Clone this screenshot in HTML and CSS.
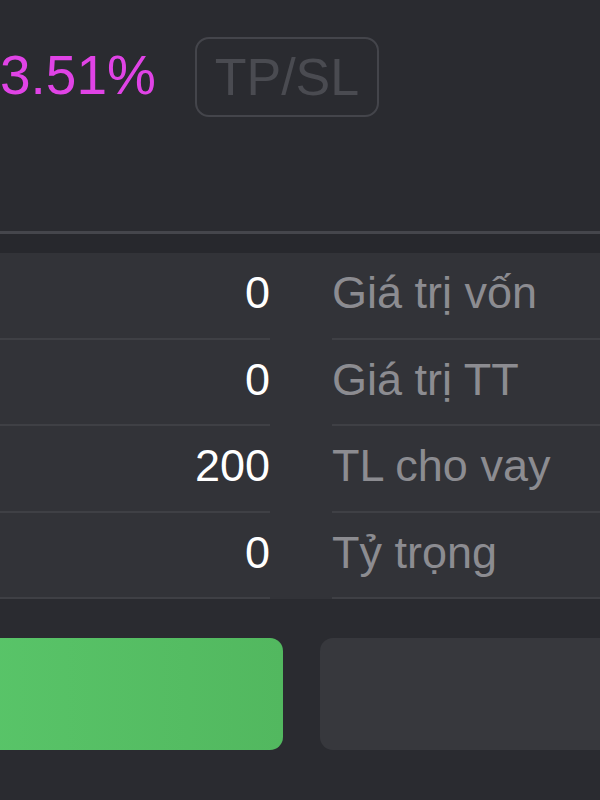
FILE: index.html
```html
<!DOCTYPE html>
<html lang="vi">
<head>
<meta charset="utf-8">
<link rel="stylesheet" href="styles.css">
</head>
<body>
<div class="page">
  <div class="header">
    <span class="pct">3.51%</span>
    <div class="tpsl">TP/SL</div>
  </div>
  <div class="divider"></div>
  <div class="strip"></div>
  <div class="table">
    <div class="row"><div class="val">0</div><div class="gap"></div><div class="lbl">Giá trị vốn</div></div>
    <div class="row"><div class="val">0</div><div class="gap"></div><div class="lbl">Giá trị TT</div></div>
    <div class="row"><div class="val">200</div><div class="gap"></div><div class="lbl">TL cho vay</div></div>
    <div class="row"><div class="val">0</div><div class="gap"></div><div class="lbl">Tỷ trọng</div></div>
  </div>
  <div class="actions">
    <div class="btn btn-buy"></div>
    <div class="btn btn-sell"></div>
  </div>
</div>
</body>
</html>
```
FILE: styles.css
```css
html, body {
  margin: 0;
  padding: 0;
  background: #2a2b30;
  overflow: hidden;
}
.page {
  width: 600px;
  height: 800px;
  overflow: hidden;
  font-family: "Liberation Sans", Arial, sans-serif;
}
.header {
  height: 231px;
  box-sizing: border-box;
  padding-top: 37px;
  display: flex;
  align-items: flex-start;
}
.pct {
  color: #e043e6;
  font-size: 55px;
  line-height: 76px;
  margin-left: 0;
}
.tpsl {
  margin-left: 39px;
  width: 184px;
  height: 80px;
  box-sizing: border-box;
  border: 2px solid #44454b;
  border-radius: 14px;
  color: #4a4b51;
  font-size: 52px;
  display: flex;
  align-items: center;
  justify-content: center;
}
.divider {
  height: 3px;
  background: #45464c;
}
.strip {
  height: 19px;
  background: #27282d;
}
.table {
  background: #323338;
}
.row {
  display: flex;
  height: 86.5px;
  font-size: 45px;
}
.val {
  width: 270px;
  flex: none;
  box-sizing: border-box;
  color: #ffffff;
  text-align: right;
  border-bottom: 2px solid #3f4045;
  display: flex;
  align-items: center;
  justify-content: flex-end;
  padding-bottom: 4px;
}
.gap {
  width: 62px;
  flex: none;
}
.lbl {
  flex: 1;
  box-sizing: border-box;
  color: #8c8c91;
  border-bottom: 2px solid #3f4045;
  display: flex;
  align-items: center;
  padding-bottom: 4px;
}
.actions {
  display: flex;
  gap: 37px;
  margin-top: 39px;
  margin-left: -30px;
  width: 680px;
}
.btn {
  height: 112px;
  border-radius: 13px;
}
.btn-buy {
  width: 313px;
  flex: none;
  background: linear-gradient(90deg, #59c569, #52b85f);
}
.btn-sell {
  flex: 1;
  background: #37383d;
}
```
